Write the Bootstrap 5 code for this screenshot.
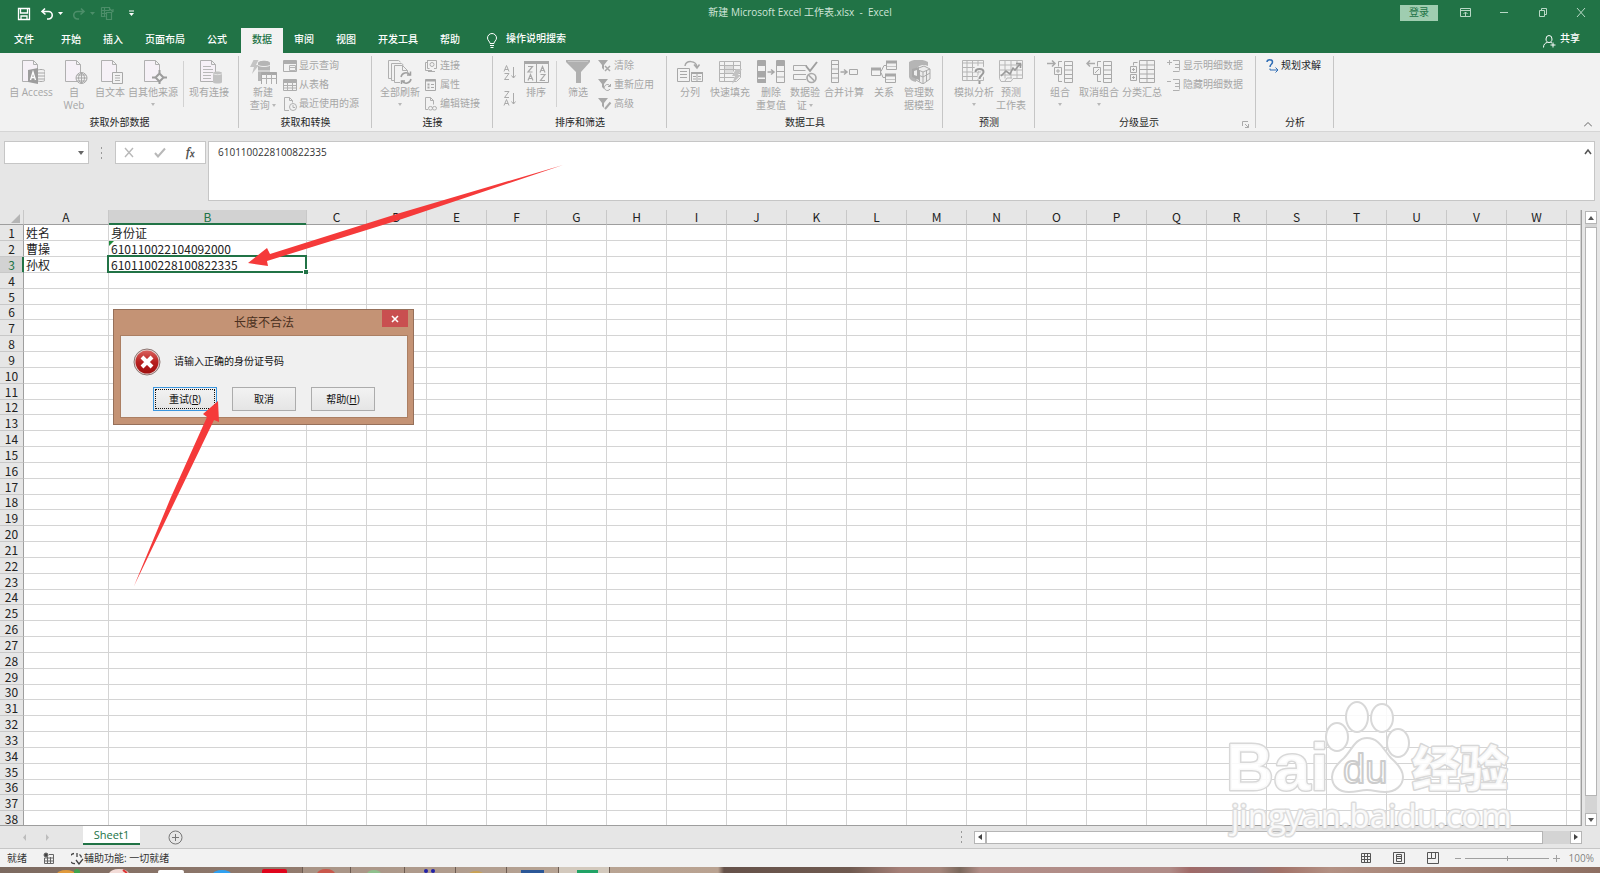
<!DOCTYPE html>
<html lang="zh-CN">
<head>
<meta charset="utf-8">
<meta name="viewport" content="width=device-width, initial-scale=1">
<title>新建 Microsoft Excel 工作表.xlsx - Excel</title>
<link href="https://cdn.jsdelivr.net/npm/bootstrap@5.3.0/dist/css/bootstrap.min.css" rel="stylesheet">
<script src="https://cdn.jsdelivr.net/npm/bootstrap@5.3.0/dist/js/bootstrap.bundle.min.js"></script>
<style>
  :root { --xl: #217346; --chrome: #e6e6e6; --ribbon: #f2f2f2; --dim: #b0b0b0; }
  body { font: 10px/13px "Open Sans", "Noto Sans CJK SC", sans-serif; color: #262626; background: var(--chrome); overflow: hidden; }
  button, input { font: inherit; color: inherit; border: 0; padding: 0; background: none; border-radius: 0; }
  svg { flex: none; display: block; }
  .sheet-table, .ribbon-tile, .list-cmd { white-space: nowrap; }

  .title-bar { background: var(--xl); height: 28px; padding-bottom: 3px; color: #cfe5d8; }
  .side-l { padding-left: 17px; gap: 5px; padding-top: 2px; }
  .side-r { padding-right: 13px; gap: 26px; }
  .login { background: #9fcdb0; color: var(--xl); width: 38px; height: 16px; margin-right: -5px; }
  .tab-bar { background: var(--xl); height: 25px; color: #fff; font-weight: 500; padding-right: 20px; }
  .tab-bar button { padding: 0 11px 2px; height: 25px; }
  .tab-bar .file-tab { padding: 0 16px 2px 14px; }
  .tab-bar .picked { background: var(--ribbon); color: var(--xl); margin: 0 0 0 3px; }
  .tell { margin-left: 16px; gap: 9px; }

  .ribbon { background: var(--ribbon); height: 79px; border-bottom: 1px solid #d5d5d5; }
  .ribbon-group { padding: 3px 7px 0; position: relative; }
  .ribbon-group::after { content: ""; position: absolute; right: 0; top: 3px; height: 72px; border-right: 1px solid #c6c6c6; }
  .group-name { height: 15px; line-height: 13px; text-align: center; color: #262626; }
  .g7 .group-name { padding-right: 13px; }
  .ribbon-tile { color: #a6a6a6; padding-top: 4px; display: flex; flex-direction: column; align-items: center; line-height: 13px; }
  .ribbon-tile svg { margin-bottom: 2px; }
  .g1 .ribbon-tile svg { margin-left: 4px; }
  .ribbon-tile .drop { margin: 4px 0 0; }
  .drop { display: inline-block; border: 2px solid transparent; border-top: 3px solid #b8b8b8; border-bottom: 0; vertical-align: 2px; }
  .w20 { width: 20px; } .w32 { width: 32px; } .w34 { width: 34px; } .w36 { width: 36px; } .w38 { width: 38px; }
  .w40 { width: 40px; } .w42 { width: 42px; } .w44 { width: 44px; } .w48 { width: 48px; } .w52 { width: 52px; }
  .rule { width: 1px; height: 46px; background: #d2d2d2; margin: 5px 4px 0; }
  .list-cmd { display: flex; align-items: center; gap: 2px; height: 19px; color: #a6a6a6; }
  .cmd-list { margin-left: 3px; }
  .g1 { width: 239px; } .g2 { width: 133px; } .g3 { width: 121px; } .g4 { width: 174px; } .g5 { width: 276px; }
  .g6 { width: 92px; } .g7 { width: 221px; } .g8 { width: 78px; }

  .formula-row { padding: 9px 5px 9px 4px; }
  .white-box { background: #fff; border: 1px solid #c6c6c6; height: 23px; }
  .name-box { width: 85px; }
  .name-box input { width: 68px; outline: 0; }
  .fx-box { width: 91px; padding: 0 6px; margin-right: 2px; }
  .formula-box { height: 60px; }
  .formula-box textarea { border: 0; resize: none; outline: 0; padding: 4px 9px; font: 10px/13px "Open Sans", sans-serif; color: #333; background: none; height: 100%; }

  .sheet-table { table-layout: fixed; border-collapse: separate; border-spacing: 0; width: 100%; font: 12px/14px "Noto Sans CJK SC", sans-serif; background: #fff; color: #222; }
  .sheet-table th { font-weight: 400; text-align: center; background: var(--chrome); padding: 0; }
  .sheet-table td, .sheet-table th { height: 16px; }
  .sheet-table tbody tr:nth-child(6n) td, .sheet-table tbody tr:nth-child(6n) th { height: 15px; }
  .sheet-table thead th { border-right: 1px solid #c8c8c8; border-bottom: 1px solid #9e9e9e; height: 15px; }
  .sheet-table tbody th { border-right: 1px solid #9e9e9e; border-bottom: 1px solid #c8c8c8; }
  .sheet-table td { border-right: 1px solid #d4d4d4; border-bottom: 1px solid #d4d4d4; padding: 0 2px; position: relative; }
  .sheet-table thead th.on { background: #d2d2d2; color: var(--xl); border-bottom-color: var(--xl); box-shadow: inset 0 -1px var(--xl); }
  .sheet-table tbody th.on { background: #d2d2d2; color: var(--xl); border-right-color: var(--xl); box-shadow: inset -1px 0 var(--xl); }
  .c-head { width: 24px; } .c-a { width: 85px; } .c-b { width: 198px; } .c-std { width: 60px; }
  td.warned::before { content: ""; position: absolute; left: 0; top: 0; border-top: 5px solid #1e8a3c; border-right: 5px solid transparent; }
  td.cursor::after { content: ""; position: absolute; inset: -2px -1px -1px -2px; border: 2px solid var(--xl); }
  td.cursor span { position: absolute; right: -2px; bottom: -2px; width: 5px; height: 5px; background: var(--xl); border: 1px solid #fff; border-width: 1px 0 0 1px; z-index: 2; }
  .grid-wrap { border-right: 1px solid #9e9e9e; border-bottom: 1px solid #9e9e9e; }
  .v-scroll { width: 18px; padding: 1px 3px 0; }
  .scroll-btn { width: 12px; height: 13px; background: #fff; border: 1px solid #b5b5b5; display: flex; align-items: center; justify-content: center; }
  .v-track { background: #d4d4d4; padding: 3px 0 17px; }
  .scroll-thumb { background: #fff; border: 1px solid #b5b5b5; }

  .tabs-row { height: 22px; padding-right: 18px; }
  .sheet-tab { width: 57px; height: 19px; margin-left: 30px; background: #fff; color: var(--xl); border-bottom: 2px solid var(--xl); font-size: 11px; }
  .h-scroll { width: 608px; height: 13px; }
  .h-track { background: #d4d4d4; padding-right: 27px; }
  .status-row { height: 19px; background: var(--ribbon); border-top: 1px solid #c6c6c6; padding: 0 6px 0 7px; color: #333; }
  .view-gap { margin: 0 22px 0 21px; }
  .task-strip { height: 6px; overflow: hidden; background: linear-gradient(90deg, #7c6a60 0, #927b6e 300px, #b8a493 600px, #b9a291 718px, #66524a 724px, #6f5a50 850px, #a58078 900px, #a5867c 940px, #7a685c 960px, #b28e88 980px, #b08c88 1170px, #a06a68 1190px, #8f7478 1250px, #a27268 1280px, #b39184 1330px, #8d6f62 1600px); }

  .msg-box { left: 113px; top: 309px; width: 301px; height: 116px; background: #c49375; border: 1px solid #96705a; padding: 0 5px 6px 6px; }
  .msg-title { height: 25px; font: 12px/24px "Noto Sans CJK SC", sans-serif; color: #4a3020; position: relative; }
  .msg-close { width: 26px; height: 17px; background: #c94f50; position: absolute; right: 0; top: 0; display: flex; align-items: center; justify-content: center; }
  .msg-body { background: #f0f0f0; border: 1px solid #ab7f63; padding: 12px 0 6px 12px; color: #111; }
  .msg-body span { padding: 0 0 1px 13px; }
  .msg-btn { width: 64px; height: 24px; border: 1px solid #acacac; background: linear-gradient(#f2f2f2, #e5e5e5); }
  .msg-btn.main-btn { border-color: #3c96dd; outline: 1px dotted #111; outline-offset: -3px; }
  .msg-btns { gap: 15px; margin-left: 20px; }
  .arrows { left: 0; top: 0; pointer-events: none; }
  .brand-mark { right: 87px; bottom: 28px; pointer-events: none; }
</style>
</head>
<body class="vh-100 d-flex flex-column position-relative">

<svg width="0" height="0" class="position-absolute">
  <defs>
    <symbol id="page" viewBox="0 0 24 24"><path d="M1.500.500h11l4 4v17h-15zM12.500.500v4h4" fill="#f6f1f7" stroke="#b0b0b0"/></symbol>
    <symbol id="tbl" viewBox="0 0 14 14"><path d="M.500 1.500h13v11h-13z" fill="none" stroke="#adadad"/><path d="M1 2h12v3H1z" fill="#adadad"/></symbol>
  </defs>
</svg>

<header>
  <div class="title-bar d-flex align-items-center">
    <div class="side-l d-flex align-items-center flex-fill w-25">
      <button aria-label="保存"><svg width="14" height="14" viewBox="0 0 14 14" fill="none" stroke="#fff" stroke-width="1.300"><path d="M1.500 1.500h11v11h-11zM3.500 1.500v4.500h7V1.500M4 12.500V9h6v3.500"/></svg></button>
      <button aria-label="撤消" class="ms-1 d-flex align-items-center gap-1"><svg width="14" height="14" viewBox="0 0 14 14" fill="none" stroke="#fff" stroke-width="1.600"><path d="M5 1.500L2 4.500l3.500 3M2 4.500h6.500a3.500 3.500 0 0 1 0 7.500H7"/></svg><svg width="5" height="3"><path d="M0 0h5L2.500 3z" fill="#fff"/></svg></button>
      <button aria-label="恢复" class="ms-1 d-flex align-items-center gap-1"><svg width="14" height="14" viewBox="0 0 14 14" fill="none" stroke="#4c8e69" stroke-width="1.600"><path d="M9 1.500l3 3-3.500 3M12 4.500H5.500a3.500 3.500 0 0 0 0 7.500H7"/></svg><svg width="5" height="3"><path d="M0 0h5L2.500 3z" fill="#4c8e69"/></svg></button>
      <button aria-label="属性"><svg width="15" height="16" viewBox="0 0 15 16" fill="none" stroke="#4c8e69" stroke-width="1.200"><path d="M1.500 1.500h8v3M1.500 1.500v9h4M1.500 4.500h8M1.500 7.500h5M4.500 1.500v9M6.500 6.500h5v7h-5zM10 3l3 3M13 3v3"/></svg></button>
      <button aria-label="自定义快速访问工具栏" class="ms-2"><svg width="7" height="7"><path d="M1 1h5" stroke="#fff"/><path d="M1 3h5L3.500 6z" fill="#fff"/></svg></button>
    </div>
    <div class="text-nowrap">新建 Microsoft Excel 工作表.xlsx&nbsp; -&nbsp; Excel</div>
    <div class="side-r d-flex align-items-center justify-content-end flex-fill w-25">
      <button class="login">登录</button>
      <button aria-label="功能区显示选项"><svg width="13" height="11" fill="none" stroke="#b9d8c6"><path d="M1.500 1.500h10v8h-10zM1.500 3.500h10M6.500 9V5M4.500 7l2-2 2 2"/></svg></button>
      <button aria-label="最小化"><svg width="13" height="11"><path d="M2 5.500h8" stroke="#b9d8c6"/></svg></button>
      <button aria-label="还原"><svg width="12" height="11" fill="none" stroke="#b9d8c6"><path d="M2.500 3.500h5v6h-5zM4.500 3V1.500h5v6H8"/></svg></button>
      <button aria-label="关闭"><svg width="12" height="11" stroke="#b9d8c6"><path d="M2 1l8 9M10 1l-8 9"/></svg></button>
    </div>
  </div>

  <nav class="tab-bar d-flex align-items-center">
    <button class="file-tab">文件</button><button>开始</button><button>插入</button><button>页面布局</button><button>公式</button><button class="picked">数据</button><button>审阅</button><button>视图</button><button>开发工具</button><button>帮助</button>
    <div class="tell d-flex align-items-center"><svg width="10" height="15" viewBox="0 0 10 15" fill="none" stroke="#fff"><path d="M3 10.500C3 8.500.500 7.500.500 5a4.500 4.500 0 0 1 9 0C9.500 7.500 7 8.500 7 10.500zM3 12.500h4M3.500 14.500h3"/></svg><a href="#" class="text-white text-decoration-none pb-1">操作说明搜索</a></div>
    <a href="#" class="ms-auto d-flex align-items-center gap-1 text-white text-decoration-none"><svg width="13" height="14" viewBox="0 0 13 14" fill="none" stroke="#fff"><path d="M3 5a3 3.500 0 0 1 6 0c0 2-1 3.500-3 3.500S3 7 3 5zM.500 13.500C.500 10.500 2 9 4.500 8.300M7.500 8.300l1.500.700M10 8.500v5M7.500 11h5"/></svg><span class="pb-1">共享</span></a>
  </nav>

  <div class="ribbon d-flex align-items-start">
    <section class="ribbon-group g1 h-100 d-flex flex-column">
      <div class="d-flex flex-fill align-items-start">
        <button class="ribbon-tile w48"><svg width="24" height="24" viewBox="0 0 24 24"><use href="#page" width="24" height="24"/><path d="M16 11c0-2 8-2 8 0v9c0 2-8 2-8 0z" fill="#f2f2f2" stroke="#a8a8a8"/><path d="M16 13h8M16 16h8M16 19h8" stroke="#a8a8a8"/><path d="M7 10l10-2v16L7 22z" fill="#9d9d9d"/><path d="M9.500 20l2.500-8 2.500 8M10.500 17.500h3" fill="none" stroke="#fff" stroke-width="1.300"/></svg><span>自 Access</span></button>
        <button class="ribbon-tile w38"><svg width="24" height="24" viewBox="0 0 24 24"><use href="#page" width="24" height="24"/><g fill="#f2f2f2" stroke="#a8a8a8"><circle cx="17.500" cy="18" r="5.500"/><path d="M12 18h11M13 15h9M13 21h9M17.500 12.500v11M17.500 12.500c-4 3-4 8 0 11M17.500 12.500c4 3 4 8 0 11" fill="none"/></g></svg><span>自</span><span>Web</span></button>
        <button class="ribbon-tile w34"><svg width="24" height="24" viewBox="0 0 24 24"><use href="#page" width="24" height="24"/><path d="M12.500 12.500h10v11h-10z" fill="#f2f2f2" stroke="#a8a8a8"/><path d="M15 15.500h5M15 18h5M15 20.500h5" stroke="#b0b0b0"/></svg><span>自文本</span></button>
        <button class="ribbon-tile w52"><svg width="24" height="24" viewBox="0 0 24 24"><use href="#page" width="24" height="24"/><path d="M16.500 13.500l4 4-4 4-4-4z" fill="#f2f2f2" stroke="#9d9d9d" stroke-width="2"/><path d="M16.500 10v3M16.500 22v2M9 17.500h3M21 17.500h3" stroke="#9d9d9d" stroke-width="2"/></svg><span>自其他来源</span><i class="drop"></i></button>
        <div class="rule"></div>
        <button class="ribbon-tile w42"><svg width="24" height="24" viewBox="0 0 24 24"><use href="#page" width="24" height="24"/><path d="M4 6.500h8M4 9.500h10M4 12.500h10M4 15.500h8M4 18.500h8" stroke="#b8b8b8"/><path d="M14 13c0-2 9-2 9 0v9c0 2-9 2-9 0z" fill="#c2c2c2"/><path d="M14 13.500c1 1.500 8 1.500 9 0" fill="none" stroke="#e6e6e6"/></svg><span>现有连接</span></button>
      </div><div class="group-name">获取外部数据</div>
    </section>

    <section class="ribbon-group g2 h-100 d-flex flex-column">
      <div class="d-flex flex-fill align-items-start">
        <button class="ribbon-tile w34"><svg width="28" height="24" viewBox="0 0 28 24"><path d="M5-1h5L7 5h3l-7 9 2-7H1z" fill="#c4c4c4"/><path d="M9 3c0-3 12-3 12 0v18H9z" fill="#b5b5b5"/><path d="M9 5c1 2 11 2 12 0M9 11h12" fill="none" stroke="#ededed"/><path d="M12.500 12.500h15v12h-15z" fill="#f4f4f4" stroke="#a8a8a8"/><path d="M12.500 13.500h15" stroke="#a8a8a8" stroke-width="3"/><path d="M12.500 18.500h15M17.500 14v10M22.500 14v10" stroke="#b0b0b0"/></svg><span>新建</span><span>查询 <i class="drop"></i></span></button>
        <div class="cmd-list">
          <button class="list-cmd"><svg width="14" height="14"><use href="#tbl"/><path d="M6.500 6.500h6v5h-6zM6.500 8.500h6" fill="none" stroke="#b5b5b5"/></svg>显示查询</button>
          <button class="list-cmd"><svg width="14" height="14"><use href="#tbl"/><path d="M1 7.500h12M1 10h12M4.500 4v8M9.500 4v8" stroke="#b0b0b0"/></svg>从表格</button>
          <button class="list-cmd"><svg width="14" height="14" fill="none" stroke="#b0b0b0"><path d="M6 13.500H1.500V.500h5l3 3v2M6.500.500v3h3"/><circle cx="10" cy="10" r="3.500"/><path d="M10 8v2.500h2"/></svg>最近使用的源</button>
        </div>
      </div><div class="group-name">获取和转换</div>
    </section>

    <section class="ribbon-group g3 h-100 d-flex flex-column">
      <div class="d-flex flex-fill align-items-start">
        <button class="ribbon-tile w42"><svg width="24" height="24" viewBox="0 0 24 24" fill="none" stroke="#b0b0b0"><path d="M3 18.500H.500V.500h10l2 1.500M6 20.500H3.500v-17h10l2 1.500M12 22.500H6.500v-17h8l5 5v2M14.500 5.500v5h5"/><path d="M13 17a5 5 0 0 1 9-2M23 19a5 5 0 0 1-9 2" stroke="#a0a0a0" stroke-width="1.500"/><path d="M22.500 11.500V15H19M13.500 24.500V21H17" stroke="#a0a0a0" stroke-width="1.500"/></svg><span>全部刷新</span><i class="drop"></i></button>
        <div class="cmd-list">
          <button class="list-cmd"><svg width="14" height="14" fill="none" stroke="#adadad"><path d="M3 1.500h9.500v8H10M8 11.500H1.500v-8H3M3.500 1.500v8h2"/><circle cx="8" cy="5.500" r="2"/><path d="M4 12.500h7"/></svg>连接</button>
          <button class="list-cmd"><svg width="14" height="14" fill="none" stroke="#a8a8a8"><path d="M1.500 1.500h10v11h-10z"/><path d="M1.500 2.500h10" stroke-width="2"/><path d="M3.500 6.500h2M3.500 9.500h2" stroke-width="2"/><path d="M7 6.500h3M7 9.500h3"/></svg>属性</button>
          <button class="list-cmd"><svg width="14" height="14" fill="none" stroke="#b0b0b0"><path d="M4 12.500H1.500V.500h5l3 3v4M6.500.500v3h3"/><rect x="4.500" y="9.500" width="4" height="3.500" rx="1.700"/><rect x="8.500" y="9.500" width="4" height="3.500" rx="1.700"/></svg>编辑链接</button>
        </div>
      </div><div class="group-name">连接</div>
    </section>

    <section class="ribbon-group g4 h-100 d-flex flex-column">
      <div class="d-flex flex-fill align-items-start">
        <div class="w20 d-flex flex-column align-items-center gap-2 pt-2">
          <button aria-label="升序"><svg width="14" height="18" viewBox="0 0 14 18" fill="none" stroke="#aaa"><path d="M1 7.500l2.500-6 2.500 6M2 5.500h3M1.500 9.500H6L1.500 15.500H6M10.500 3v11M8.500 11.500l2 2.500 2-2.500"/></svg></button>
          <button aria-label="降序"><svg width="14" height="18" viewBox="0 0 14 18" fill="none" stroke="#aaa"><path d="M1.500 1.500H6L1.500 7.500H6M1 15.500l2.500-6 2.500 6M2 13.500h3M10.500 3v11M8.500 11.500l2 2.500 2-2.500"/></svg></button>
        </div>
        <button class="ribbon-tile w32"><svg width="25" height="24" viewBox="0 0 25 24" fill="none" stroke="#a8a8a8"><path d="M.500 1.500h24v21H.500zM12.500 2v20"/><path d="M0 2.500h25" stroke-width="3"/><path d="M4 6.500h4.500L4 12h4.500M4 20.500l2.500-6 2.500 6M5 18.500h3M16 12.500l2.500-6 2.500 6M17 10.500h3M16.500 14.500H21l-4.500 6H21" stroke-width="1.200"/></svg><span>排序</span></button>
        <div class="rule"></div>
        <button class="ribbon-tile w34"><svg width="24" height="24" viewBox="0 0 24 24"><path d="M0 0h24v2l-9 10v11h-5V12L0 2z" fill="#b0b0b0"/><path d="M2 1.500h20" stroke="#c6c6c6"/></svg><span>筛选</span></button>
        <div class="cmd-list">
          <button class="list-cmd"><svg width="14" height="14"><path d="M0 1h10L6 6v5L4 9V6z" fill="#a8a8a8"/><path d="M7 7l5 5M12 7l-5 5" stroke="#a8a8a8" stroke-width="1.500"/></svg>清除</button>
          <button class="list-cmd"><svg width="14" height="14"><path d="M0 1h10L6 6v5L4 9V6z" fill="#a8a8a8"/><path d="M12 8a3 3 0 1 0 0 3M12.500 6v2.500H10" fill="none" stroke="#a8a8a8"/></svg>重新应用</button>
          <button class="list-cmd"><svg width="14" height="14"><path d="M0 1h10L6 6v5L4 9V6z" fill="#a8a8a8"/><path d="M7 12l5.500-6.500" stroke="#a8a8a8" stroke-width="2"/></svg>高级</button>
        </div>
      </div><div class="group-name">排序和筛选</div>
    </section>

    <section class="ribbon-group g5 h-100 d-flex flex-column">
      <div class="d-flex flex-fill align-items-start">
        <button class="ribbon-tile w32"><svg width="26" height="24" viewBox="0 0 26 24" fill="none" stroke="#a8a8a8"><path d="M.500 8.500h12v13H.500zM3 11.500h7M3 14.500h7M3 17.500h7"/><path d="M14.500 12.500h11v9h-11zM20 12.500v9M16 16.500h3M21 16.500h3M16 19h3M21 19h3"/><path d="M14 13h12" stroke-width="2"/><path d="M8 6c1-6 11-6 12 1M17 4.500l3 3.500 2.500-3.500" stroke-width="1.500"/></svg><span>分列</span></button>
        <button class="ribbon-tile w48"><svg width="24" height="24" viewBox="0 0 24 24" fill="none" stroke="#b5b5b5"><path d="M1.500 1.500h21v16l-4 4h-17zM1.500 5.500h21M1.500 9.500h21M1.500 13.500h21M1.500 17.500h15M6.500 1.500v20M15.500 1.500v10"/><path d="M7 6h8v3H7zM7 10h8v3H7z" fill="#dcdcdc" stroke="none"/><path d="M18 9h6l-4 6h3l-9 9 3-8h-3z" fill="#c2c2c2" stroke="none"/></svg><span>快速填充</span></button>
        <button class="ribbon-tile w34"><svg width="28" height="24" viewBox="0 0 28 24" fill="none" stroke="#a8a8a8"><path d="M.500.500h8v22h-8zM19.500.500h8v22h-8zM1 5.500h8M1 11.500h8M1 17h8M19.500 5.500h8M19.500 11.500h8M19.500 17h8"/><path d="M1 1h8v4H1zM1 12h8v5H1zM1 19h8v4H1zM20 1h8v4h-8z" fill="#a8a8a8" stroke="none"/><path d="M10.500 12h6M14 9.500l3 2.500-3 2.500" stroke-width="1.500"/></svg><span>删除</span><span>重复值</span></button>
        <button class="ribbon-tile w34"><svg width="25" height="24" viewBox="0 0 25 24" fill="none" stroke="#aaa"><path d="M14 5.500H.500v5h12M13 14.500H.500v5H13"/><path d="M13 6l4 5 7-9" stroke="#a0a0a0" stroke-width="2"/><circle cx="18.500" cy="18" r="4.500" stroke-width="1.700"/><path d="M15.500 15l6 6" stroke-width="1.700"/></svg><span>数据验</span><span>证 <i class="drop"></i></span></button>
        <button class="ribbon-tile w44"><svg width="28" height="24" viewBox="0 0 28 24" fill="none" stroke="#a8a8a8"><path d="M1.500.500h7v22h-7zM1.500 4.500h7M1.500 9h7M1.500 13.500h7M1.500 18h7M19.500 9.500h8v5h-8z"/><path d="M10.500 12h6M14 9.500l3 2.500-3 2.500" stroke-width="1.500"/></svg><span>合并计算</span></button>
        <button class="ribbon-tile w36"><svg width="26" height="24" viewBox="0 0 26 24" fill="none" stroke="#a8a8a8"><path d="M.500 8.500h9v7h-9zM15.500 1.500h10v8h-10zM14.500 14.500h10v8h-10zM10 11.500l3-6h2M10 12.500l2 5h2"/><path d="M0 9h10M15 2h11M14 15h11" stroke-width="3"/><path d="M16 6.500h9M15 19.500h9" stroke="#c6c6c6"/></svg><span>关系</span></button>
        <button class="ribbon-tile w34"><svg width="24" height="24" viewBox="0 0 24 24"><path d="M2 2q9-5 19 0v4q-7-3-12 3v13Q3 21 2 17z" fill="#b5b5b5"/><path d="M9 9l8-3 6 3v10l-7 5-7-4z" fill="#ececec" stroke="#aaa"/><path d="M9 9l7 3 7-3M16 12v12M9 14l7 3 7-4M12.500 10.500v11M19.500 11v10" fill="none" stroke="#aaa"/><path d="M5 9l7-2v13l-7-3z" fill="#a8a8a8"/><path d="M7 11l3-1v6l-3-1z" fill="#eee"/></svg><span>管理数</span><span>据模型</span></button>
      </div><div class="group-name">数据工具</div>
    </section>

    <section class="ribbon-group g6 h-100 d-flex flex-column">
      <div class="d-flex flex-fill align-items-start ps-1">
        <button class="ribbon-tile w40"><svg width="24" height="24" viewBox="0 0 24 24" fill="none" stroke="#b5b5b5"><path d="M.500.500h21v20H.500zM.500 3h21M.500 7.500h21M.500 12h21M.500 16.500h21M5 .500v20M10.500.500v20M16 .500v20"/><path d="M13 12c0-5 9-5 9 0 0 3-4.500 3-4.500 7M17.500 21.500v2.500" stroke="#f2f2f2" stroke-width="5"/><path d="M13.500 12c0-4 8-4 8 0 0 3-4 3-4 7M17.500 21v3" stroke="#9a9a9a" stroke-width="2"/></svg><span>模拟分析</span><i class="drop"></i></button>
        <button class="ribbon-tile w38"><svg width="24" height="24" viewBox="0 0 24 24" fill="none" stroke="#b8b8b8"><path d="M.500.500h23v18H14l-2 3H2l-1.500-3zM.500 5h23M.500 10h23M.500 15h23M6 .500v18M12 .500v18M18 .500v18M6 21l2-3h5"/><path d="M2 16l5-5 4 3 3-6 2 2 5-6M17 3.500h4.500V8" stroke="#9a9a9a" stroke-width="1.600"/></svg><span>预测</span><span>工作表</span></button>
      </div><div class="group-name">预测</div>
    </section>

    <section class="ribbon-group g7 h-100 d-flex flex-column">
      <div class="d-flex flex-fill align-items-start">
        <button class="ribbon-tile w36"><svg width="26" height="24" viewBox="0 0 26 24" fill="none" stroke="#aaa"><path d="M17.500 1.500h8v21h-8zM17.500 5.500h8M17.500 10h8M17.500 14.500h8M17.500 18.500h8M15 1.500h-3.500v5M11.500 15v6.500H15M7.500 7.500h7v7h-7zM11 9v4M9 11h4"/><path d="M0 3.500h8M5 .500l3 3-3 3" stroke-width="1.500"/></svg><span>组合</span><i class="drop"></i></button>
        <button class="ribbon-tile w42"><svg width="26" height="24" viewBox="0 0 26 24" fill="none" stroke="#aaa"><path d="M17.500 1.500h8v21h-8zM17.500 5.500h8M17.500 10h8M17.500 14.500h8M17.500 18.500h8M15 1.500h-3.500v5M11.500 15v6.500H15M7.500 7.500h7v7h-7zM9 13l4-4"/><path d="M1 3.500h8M4 .500l-3 3 3 3" stroke-width="1.500"/></svg><span>取消组合</span><i class="drop"></i></button>
        <button class="ribbon-tile w44"><svg width="25" height="24" viewBox="0 0 25 24" fill="none" stroke="#aaa"><path d="M9.500.500h15v22h-15zM9.500 5h15M9.500 9.500h15M9.500 14h15M9.500 18.500h15M17 .500v22M7.500 2.500h-4v3M.500 6.500h6v6h-6zM.500 14.500h6v6h-6zM3.500 8v3M2 9.500h3M3.500 16v3M2 17.500h3"/></svg><span>分类汇总</span></button>
        <div class="cmd-list">
          <button class="list-cmd"><svg width="14" height="14" fill="none" stroke="#b0b0b0"><path d="M0 3.500h5M2.500 1v5M6 1.500h6.500v4M8 5.500h4.500M8 8.500h4.500v3M6 12.500h6.500M12.500 5v4"/></svg>显示明细数据</button>
          <button class="list-cmd"><svg width="14" height="14" fill="none" stroke="#b0b0b0"><path d="M0 3.500h4M6 1.500h6.500v4M8 5.500h4.500M8 8.500h4.500v3M6 12.500h6.500M12.500 5v4"/></svg>隐藏明细数据</button>
        </div>
      </div><div class="group-name position-relative">分级显示<svg class="position-absolute end-0 bottom-0" width="7" height="11" fill="none" stroke="#aaa"><path d="M.500 6V1.500H6M3 4l3.500 3.500M6.500 4v3.500H3"/></svg></div>
    </section>

    <section class="ribbon-group g8 h-100 d-flex flex-column">
      <div class="flex-fill"><div class="cmd-list"><button class="list-cmd text-dark"><svg width="13" height="14" fill="none"><path d="M1 3c0-3 5.500-3 5.500 0 0 2.500-2.500 2-2.500 5" stroke="#2f6db5" stroke-width="1.500"/><path d="M4 9.500V11h8M9.500 8.500L12 11l-2.500 2.500" stroke="#2f6db5"/></svg>规划求解</button></div></div>
      <div class="group-name">分析</div>
    </section>
    <button class="ms-auto align-self-end pe-2 pb-1" aria-label="折叠功能区"><svg width="8" height="5"><path d="M0 4.500l4-4 4 4" fill="none" stroke="#666"/></svg></button>
  </div>

  <div class="formula-row d-flex align-items-start">
    <div class="name-box white-box d-flex align-items-center"><input aria-label="名称框"><button class="ms-auto me-1" aria-label="展开名称框"><svg width="6" height="4"><path d="M0 0h6L3 4z" fill="#666"/></svg></button></div>
    <svg width="26" height="23"><path d="M12.500 6v12" stroke="#999" stroke-dasharray="2 3"/></svg>
    <div class="fx-box white-box d-flex align-items-center justify-content-between">
      <button aria-label="取消"><svg width="14" height="11"><path d="M3 1l8 9M11 1L3 10" stroke="#b8b8b8" stroke-width="1.400"/></svg></button>
      <button aria-label="输入"><svg width="14" height="11"><path d="M2 6l3 3.500 7-8" fill="none" stroke="#b8b8b8" stroke-width="2"/></svg></button>
      <button aria-label="插入函数"><svg width="16" height="17" font-family="Liberation Serif" font-style="italic" fill="#444" stroke="#444" stroke-width=".300"><text x="3" y="12" font-size="13">f</text><text x="7" y="13" font-size="10">x</text></svg></button>
    </div>
    <div class="formula-box white-box flex-fill d-flex"><textarea class="flex-fill" aria-label="编辑栏" spellcheck="false">6101100228100822335</textarea><svg width="12" height="18"><path d="M3 12l3-4 3 4" fill="none" stroke="#555" stroke-width="1.500"/></svg></div>
  </div>
</header>

<main class="flex-fill d-flex overflow-hidden">
  <div class="grid-wrap flex-fill overflow-hidden">
    <table class="sheet-table">
      <colgroup id="cols"><col class="c-head"><col class="c-a"><col class="c-b"></colgroup>
      <thead><tr id="heads"><th><svg width="22" height="13"><path d="M20 3v9H11z" fill="#b5b5b5"/></svg></th></tr></thead>
      <tbody id="cells"></tbody>
    </table>
  </div>
  <div class="v-scroll d-flex flex-column">
    <button class="scroll-btn" aria-label="向上滚动"><svg width="6" height="4"><path d="M0 4h6L3 0z" fill="#555"/></svg></button>
    <div class="v-track flex-fill d-flex"><div class="scroll-thumb flex-fill"></div></div>
    <button class="scroll-btn" aria-label="向下滚动"><svg width="6" height="4"><path d="M0 0h6L3 4z" fill="#555"/></svg></button>
  </div>
</main>

<footer>
  <div class="tabs-row d-flex align-items-center">
    <svg width="53" height="9"><path d="M26 1v7l-3-3.500zM46 1v7l3-3.500z" fill="#bdbdbd"/></svg>
    <button class="sheet-tab align-self-start">Sheet1</button>
    <button class="ms-4 ps-1" aria-label="新工作表"><svg width="15" height="15" fill="none" stroke="#777"><circle cx="7.500" cy="7.500" r="6.500"/><path d="M4 7.500h7M7.500 4v7"/></svg></button>
    <svg class="ms-auto me-1" width="8" height="12"><path d="M3.500 0v12" stroke="#999" stroke-dasharray="2 3"/></svg>
    <div class="h-scroll d-flex ms-1">
      <button class="scroll-btn" aria-label="向左滚动"><svg width="4" height="6"><path d="M4 0v6L0 3z" fill="#444"/></svg></button>
      <div class="h-track flex-fill d-flex"><div class="scroll-thumb flex-fill"></div></div>
      <button class="scroll-btn" aria-label="向右滚动"><svg width="4" height="6"><path d="M0 0v6l4-3z" fill="#444"/></svg></button>
    </div>
  </div>
  <div class="status-row d-flex align-items-center">
    <span>就绪</span>
    <svg class="ms-3" width="12" height="12" fill="none" stroke="#666"><circle cx="3" cy="3" r="2" fill="#444"/><path d="M1.500 6v5.500h9V2.500H6M1.500 6h9M1.500 9h9M4.500 5v6M7.500 5v6"/></svg>
    <svg class="ms-3" width="13" height="13" fill="none" stroke="#444"><path d="M3 1.500a5 5 0 0 0 1 10M6 1v4M8.500 2.500a5 5 0 0 1 2 3M5 8l3 4 4-5" stroke-width="1.300"/></svg>
    <span>辅助功能: 一切就绪</span>
    <div class="ms-auto d-flex align-items-center">
      <svg width="12" height="12" fill="none" stroke="#555"><path d="M1.500 1.500h9v9h-9zM4.500 1.500v9M7.500 1.500v9M1.500 4.500h9M1.500 7.500h9"/></svg>
      <svg class="view-gap" width="12" height="12" fill="none" stroke="#555"><path d="M.500.500h11v11H.500zM3.500 2.500h5v7h-5zM4 4.500h4M4 6.500h4"/></svg>
      <svg width="12" height="12" fill="none" stroke="#555"><path d="M.500.500h11v11H.500zM4.500.500v6h4v-6M.500 6.500h4"/></svg>
      <svg class="ms-3 me-2" width="106" height="12" stroke="#a0a0a0"><path d="M0 6.500h6M10 6.500h84M52.500 4v5M98 6.500h7M101.500 3v7"/></svg>
      <span class="text-black-50">100%</span>
    </div>
  </div>
  <div class="task-strip">
    <svg width="1600" height="6">
      <path d="M302 0h307v6H302z" fill="#b9a799" opacity=".55"/><path d="M302.500 0v6M350.500 0v6M404.500 0v6M455.500 0v6M506.500 0v6M558.500 0v6M609.500 0v6" stroke="#6d5c52"/>
      <path d="M559 0h50v6h-50z" fill="#d3c9bd"/>
      <g><ellipse cx="66" cy="7" rx="9" ry="4" fill="#e09a3c"/><circle cx="77" cy="5" r="3" fill="#3fa34d"/><ellipse cx="119" cy="7" rx="10" ry="5" fill="#f3dcd8"/><path d="M123 3l4 3" stroke="#d33" stroke-width="2"/><rect x="158" y="3" width="26" height="4" rx="2" fill="#fff"/><ellipse cx="222" cy="7" rx="9" ry="4" fill="#2ea1f2"/><rect x="262" y="2" width="25" height="6" rx="2" fill="#e0051c"/><ellipse cx="326" cy="7" rx="9" ry="5" fill="#c9584c"/><ellipse cx="374" cy="7" rx="7" ry="4" fill="#8fc08d"/><circle cx="426" cy="4" r="2" fill="#2222a8"/><circle cx="433" cy="4" r="2" fill="#2222a8"/><ellipse cx="476" cy="7" rx="7" ry="3" fill="#c9a254"/><rect x="521" y="3" width="23" height="4" fill="#2b5797"/><rect x="577" y="3" width="21" height="4" fill="#21a366"/></g>
    </svg>
  </div>
</footer>

<div class="msg-box position-absolute d-flex flex-column" role="dialog" aria-labelledby="msgTitle">
  <div class="msg-title text-center"><span id="msgTitle">长度不合法</span><button class="msg-close" aria-label="关闭"><svg width="8" height="8"><path d="M1 1l6 6M7 1L1 7" stroke="#fff" stroke-width="1.600"/></svg></button></div>
  <div class="msg-body flex-fill d-flex flex-column justify-content-between">
    <div class="d-flex align-items-center">
      <svg width="28" height="28" viewBox="0 0 28 28"><defs><linearGradient id="red" x2="0" y2="1"><stop stop-color="#d9605c"/><stop offset=".5" stop-color="#b8201f"/><stop offset="1" stop-color="#a01010"/></linearGradient></defs><circle cx="14" cy="14" r="13" fill="#e4d4d2" stroke="#8d7471"/><circle cx="14" cy="14" r="11.500" fill="url(#red)"/><path d="M9 9l10 10M19 9L9 19" stroke="#fff" stroke-width="4"/></svg>
      <span>请输入正确的身份证号码</span>
    </div>
    <div class="msg-btns d-flex">
      <button class="msg-btn main-btn">重试(<u>R</u>)</button><button class="msg-btn">取消</button><button class="msg-btn">帮助(<u>H</u>)</button>
    </div>
  </div>
</div>

<svg class="arrows position-absolute" width="600" height="600" fill="#f53a3a">
  <path d="M563 165L400 213 270 254 267 248 248 263 268 266 267 261 402 219z"/>
  <path d="M134 586L171 497 207 417 203 414 218 401 219 422 214 420 176 499z"/>
</svg>

<svg class="brand-mark position-absolute" width="292" height="146" viewBox="0 0 292 146" fill="#fff" fill-opacity=".85" stroke="#d8d8d8" stroke-width="2" stroke-linejoin="round">
  <text x="5" y="91" font-family="Liberation Sans" font-weight="700" font-size="66" paint-order="stroke" stroke-width="3">Bai</text>
  <ellipse cx="116" cy="38" rx="11" ry="14"/><ellipse cx="136" cy="18" rx="11" ry="15"/><ellipse cx="161" cy="19" rx="11" ry="14"/><ellipse cx="177" cy="44" rx="11" ry="14"/>
  <path d="M146 39c12 0 16 11 24 20 8 7 12 13 12 19 0 9-8 15-18 15-8 0-11-2-18-2s-10 2-18 2c-10 0-17-6-17-15 0-7 5-13 12-19 8-8 11-20 23-20z"/>
  <text x="122" y="84" font-family="Liberation Sans" font-size="40" stroke="#ccc">du</text>
  <text x="191" y="87" font-family="Noto Sans CJK SC" font-weight="900" font-size="48" paint-order="stroke" stroke-width="3">经验</text>
  <text x="10" y="129" font-family="Open Sans" font-size="33" paint-order="stroke" stroke="#dcdcdc" stroke-width="3">jingyan.baidu.com</text>
</svg>

<script>
  const letters = [...'ABCDEFGHIJKLMNOPQRSTUVW', ''];
  const data = { '1A': '姓名', '1B': '身份证', '2A': '曹操', '2B': '610110022104092000', '3A': '孙权', '3B': '6101100228100822335<span></span>' };
  const marks = { '2B': 'warned', '3B': 'cursor' };
  document.getElementById('cols').insertAdjacentHTML('beforeend', '<col class="c-std">'.repeat(21) + '<col>');
  document.getElementById('heads').insertAdjacentHTML('beforeend',
    letters.map(l => `<th class="${l === 'B' ? 'on' : ''}">${l}</th>`).join(''));
  let rows = '';
  for (let r = 1; r <= 38; r++) {
    rows += `<tr><th class="${r === 3 ? 'on' : ''}">${r}</th>` +
      letters.map(l => `<td class="${marks[r + l] || ''}">${data[r + l] || ''}</td>`).join('') + '</tr>';
  }
  document.getElementById('cells').innerHTML = rows;
</script>
</body>
</html>
